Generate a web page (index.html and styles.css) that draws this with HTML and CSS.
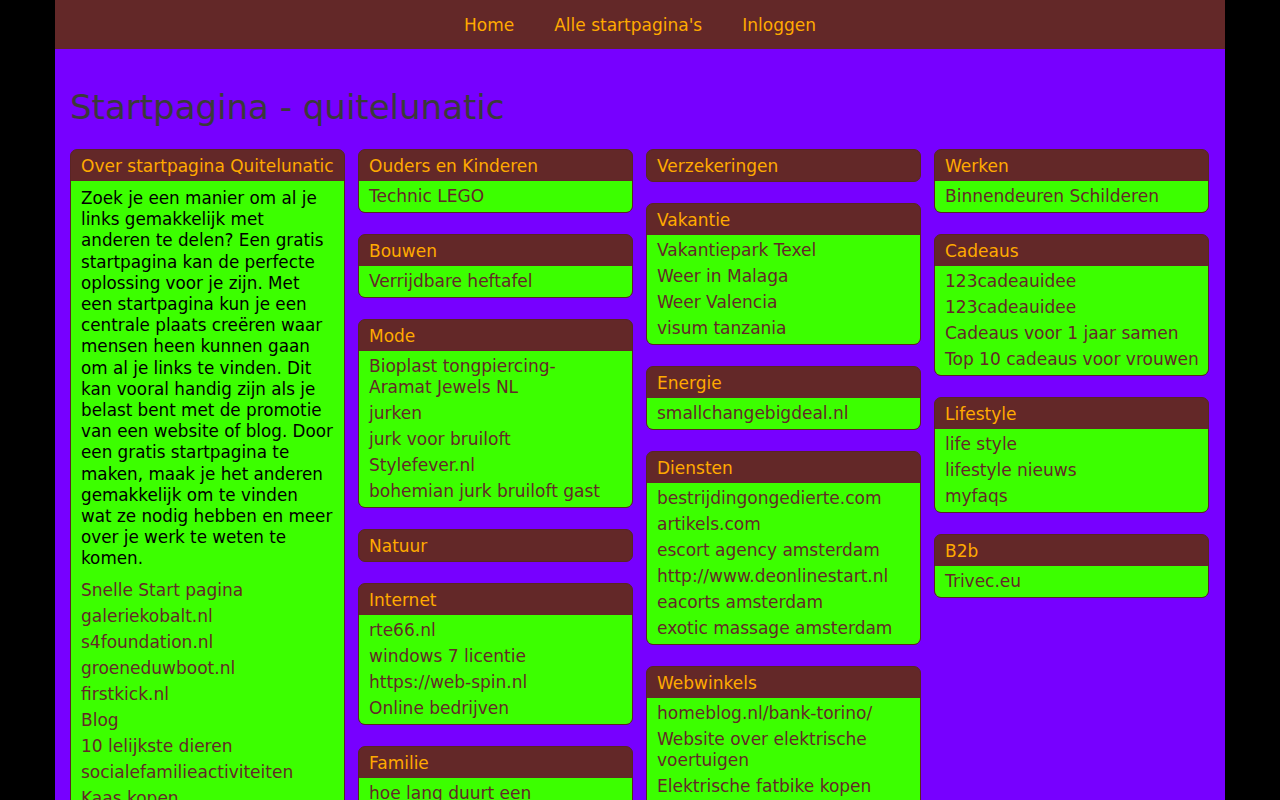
FILE: index.html
```html
<!DOCTYPE html>
<html lang="nl">
<head>
  <meta charset="UTF-8">
  <title>Startpagina - quitelunatic</title>
  <link rel="stylesheet" href="styles.css">
</head>
<body>

  <div class="wrapper">
    <nav class="topnav">
      <a href="#">Home</a>
      <a href="#">Alle startpagina's</a>
      <a href="#">Inloggen</a>
    </nav>

    <main class="page">
      <h1>Startpagina - quitelunatic</h1>

      <div class="columns">
        <!-- kolom 1 -->
        <div class="column">
          <div class="card">
            <div class="card-head">Over startpagina Quitelunatic</div>
            <div class="card-body">
              <p>Zoek je een manier om al je links gemakkelijk met anderen te delen? Een gratis startpagina kan de perfecte oplossing voor je zijn. Met een startpagina kun je een centrale plaats creëren waar mensen heen kunnen gaan om al je links te vinden. Dit kan vooral handig zijn als je belast bent met de promotie van een website of blog. Door een gratis startpagina te maken, maak je het anderen gemakkelijk om te vinden<br>wat ze nodig hebben en meer over je werk te weten te komen.</p>
              <ul>
                <li><a href="#">Snelle Start pagina</a></li>
                <li><a href="#">galeriekobalt.nl</a></li>
                <li><a href="#">s4foundation.nl</a></li>
                <li><a href="#">groeneduwboot.nl</a></li>
                <li><a href="#">firstkick.nl</a></li>
                <li><a href="#">Blog</a></li>
                <li><a href="#">10 lelijkste dieren</a></li>
                <li><a href="#">socialefamilieactiviteiten</a></li>
                <li><a href="#">Kaas kopen</a></li>
                <li><a href="#">Gezond leven</a></li>
              </ul>
            </div>
          </div>
        </div>

        <!-- kolom 2 -->
        <div class="column">
          <div class="card">
            <div class="card-head">Ouders en Kinderen</div>
            <div class="card-body">
              <ul>
                <li><a href="#">Technic LEGO</a></li>
              </ul>
            </div>
          </div>
          <div class="card">
            <div class="card-head">Bouwen</div>
            <div class="card-body">
              <ul>
                <li><a href="#">Verrijdbare heftafel</a></li>
              </ul>
            </div>
          </div>
          <div class="card">
            <div class="card-head">Mode</div>
            <div class="card-body">
              <ul>
                <li><a href="#">Bioplast tongpiercing-<br>Aramat Jewels NL</a></li>
                <li><a href="#">jurken</a></li>
                <li><a href="#">jurk voor bruiloft</a></li>
                <li><a href="#">Stylefever.nl</a></li>
                <li><a href="#">bohemian jurk bruiloft gast</a></li>
              </ul>
            </div>
          </div>
          <div class="card">
            <div class="card-head">Natuur</div>
          </div>
          <div class="card">
            <div class="card-head">Internet</div>
            <div class="card-body">
              <ul>
                <li><a href="#">rte66.nl</a></li>
                <li><a href="#">windows 7 licentie</a></li>
                <li><a href="#">https://web-spin.nl</a></li>
                <li><a href="#">Online bedrijven</a></li>
              </ul>
            </div>
          </div>
          <div class="card">
            <div class="card-head">Familie</div>
            <div class="card-body">
              <ul>
                <li><a href="#">hoe lang duurt een echtscheiding</a></li>
              </ul>
            </div>
          </div>
        </div>

        <!-- kolom 3 -->
        <div class="column">
          <div class="card">
            <div class="card-head">Verzekeringen</div>
          </div>
          <div class="card">
            <div class="card-head">Vakantie</div>
            <div class="card-body">
              <ul>
                <li><a href="#">Vakantiepark Texel</a></li>
                <li><a href="#">Weer in Malaga</a></li>
                <li><a href="#">Weer Valencia</a></li>
                <li><a href="#">visum tanzania</a></li>
              </ul>
            </div>
          </div>
          <div class="card">
            <div class="card-head">Energie</div>
            <div class="card-body">
              <ul>
                <li><a href="#">smallchangebigdeal.nl</a></li>
              </ul>
            </div>
          </div>
          <div class="card">
            <div class="card-head">Diensten</div>
            <div class="card-body">
              <ul>
                <li><a href="#">bestrijdingongedierte.com</a></li>
                <li><a href="#">artikels.com</a></li>
                <li><a href="#">escort agency amsterdam</a></li>
                <li><a href="#">http://www.deonlinestart.nl</a></li>
                <li><a href="#">eacorts amsterdam</a></li>
                <li><a href="#">exotic massage amsterdam</a></li>
              </ul>
            </div>
          </div>
          <div class="card">
            <div class="card-head">Webwinkels</div>
            <div class="card-body">
              <ul>
                <li><a href="#">homeblog.nl/bank-torino/</a></li>
                <li><a href="#">Website over elektrische voertuigen</a></li>
                <li><a href="#">Elektrische fatbike kopen</a></li>
                <li><a href="#">Tuinmeubelen</a></li>
              </ul>
            </div>
          </div>
        </div>

        <!-- kolom 4 -->
        <div class="column">
          <div class="card">
            <div class="card-head">Werken</div>
            <div class="card-body">
              <ul>
                <li><a href="#">Binnendeuren Schilderen</a></li>
              </ul>
            </div>
          </div>
          <div class="card">
            <div class="card-head">Cadeaus</div>
            <div class="card-body">
              <ul>
                <li><a href="#">123cadeauidee</a></li>
                <li><a href="#">123cadeauidee</a></li>
                <li><a href="#">Cadeaus voor 1 jaar samen</a></li>
                <li><a href="#">Top 10 cadeaus voor vrouwen</a></li>
              </ul>
            </div>
          </div>
          <div class="card">
            <div class="card-head">Lifestyle</div>
            <div class="card-body">
              <ul>
                <li><a href="#">life style</a></li>
                <li><a href="#">lifestyle nieuws</a></li>
                <li><a href="#">myfaqs</a></li>
              </ul>
            </div>
          </div>
          <div class="card">
            <div class="card-head">B2b</div>
            <div class="card-body">
              <ul>
                <li><a href="#">Trivec.eu</a></li>
              </ul>
            </div>
          </div>
        </div>
      </div>
    </main>
  </div>

</body>
</html>
```

FILE: styles.css
```css
body {
  font-family: 'DejaVu Sans', sans-serif;
  margin: 0;
  padding: 0;
  background: #000;
  color: #000;
}

a {
  text-decoration: none;
}

.wrapper {
  width: 1170px;
  margin: 0 auto;
  min-height: 100vh;
  background: #7700ff;
}

.topnav {
  display: flex;
  justify-content: center;
  align-items: center;
  height: 49px;
  background: #632828;
}

.topnav a {
  padding: 0 20px;
  color: #ffaa00;
  font-size: 17px;
}

.page {
  padding: 38px 15px 20px;
}

h1 {
  margin: 0 0 22px;
  font-size: 34px;
  font-weight: normal;
  color: #3a3a3a;
}

.columns {
  display: flex;
  gap: 13px;
  align-items: flex-start;
}

.column {
  flex: 0 0 275px;
  min-width: 0;
}

.card {
  margin-bottom: 21px;
  background: #632828;
  border: 1px solid #5a2424;
  border-radius: 7px;
  overflow: hidden;
  font-size: 17px;
  line-height: 21px;
}

.card-head {
  padding: 6px 10px 4px;
  color: #ffaa00;
}

.card-body {
  padding: 2.5px 5px 2.5px 10px;
  background: #3cff00;
}

.card-body p {
  margin: 4.5px 0 8px;
  padding-right: 5px;
  font-size: 16.8px;
  line-height: 21.2px;
}

.card-body ul {
  list-style: none;
  margin: 0;
  padding: 0;
}

.card-body li {
  padding: 2.5px 0;
}

.card-body a {
  color: #632828;
}
```
